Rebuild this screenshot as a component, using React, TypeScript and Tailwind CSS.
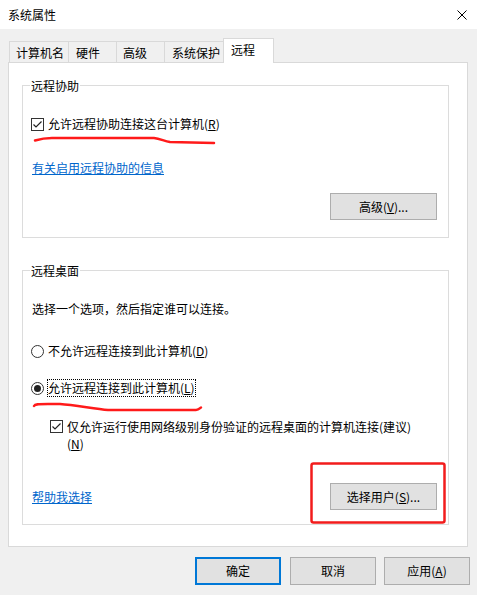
import React from "react";

const font = "font-['Noto_Sans_CJK_SC','Liberation_Sans',sans-serif]";

function CheckBox() {
  return (
    <span className="flex h-[13px] w-[13px] shrink-0 items-center justify-center border border-[#333333] bg-white">
      <svg width="11" height="11" viewBox="0 0 11 11">
        <polyline points="1.5,5.5 4,8 9.5,2.5" fill="none" stroke="#222" strokeWidth="1.2" />
      </svg>
    </span>
  );
}

function Radio({ checked }: { checked?: boolean }) {
  return (
    <span className="flex h-[13px] w-[13px] shrink-0 items-center justify-center rounded-full border border-[#333333] bg-white">
      {checked && <span className="h-[7px] w-[7px] rounded-full bg-[#222]" />}
    </span>
  );
}

function Btn({ children, className = "" }: { children: React.ReactNode; className?: string }) {
  return (
    <div className={"flex h-[27px] w-[107px] items-center justify-center border border-[#adadad] bg-[#e1e1e1] leading-[16px] " + className}>
      {children}
    </div>
  );
}

function Legend({ children }: { children: React.ReactNode }) {
  return <span className="-mt-[8px] ml-[7px] block w-fit bg-white px-[1px] leading-[16px]">{children}</span>;
}

export default function App() {
  return (
    <div className={"relative h-[595px] w-[477px] overflow-hidden bg-[#f0f0f0] text-[12px] text-black " + font}>
      {/* title bar */}
      <div className="flex h-[29px] items-center justify-between bg-white pl-[8px] pr-[10px]">
        <span className="leading-[16px]">系统属性</span>
        <svg width="10" height="10" viewBox="0 0 10 10">
          <path d="M0.5 0.5 L9.5 9.5 M9.5 0.5 L0.5 9.5" stroke="#000" strokeWidth="1" />
        </svg>
      </div>

      {/* tabs */}
      <div className="flex h-[33px] items-end pl-[9px] pt-[9px]">
        <div className="h-[21px] w-[59px] border-l border-t border-[#d9d9d9] pl-[6px] leading-[21px]">计算机名</div>
        <div className="h-[21px] w-[48px] border-l border-t border-[#d9d9d9] pl-[7px] leading-[21px]">硬件</div>
        <div className="h-[21px] w-[48px] border-l border-t border-[#d9d9d9] pl-[6px] leading-[21px]">高级</div>
        <div className="h-[21px] w-[59px] border-l border-t border-[#d9d9d9] pl-[7px] leading-[21px]">系统保护</div>
        <div className="relative z-10 -mb-px h-[25px] w-[51px] border-x border-t border-[#d9d9d9] bg-white pl-[7px] leading-[22px]">远程</div>
      </div>

      {/* panel */}
      <div className="ml-[8px] flex h-[485px] w-[460px] flex-col border border-[#d9d9d9] bg-white">
        {/* remote assistance */}
        <div className="ml-[13px] mt-[22px] flex h-[153px] w-[427px] flex-col border border-[#dcdcdc]">
          <Legend>远程协助</Legend>
          <div className="ml-[8px] mt-[22px] flex h-[16px] items-center gap-[4px] leading-[16px]">
            <CheckBox />
            <span>
              允许远程协助连接这台计算机(<u className="underline">R</u>)
            </span>
          </div>
          <a className="ml-[9px] mt-[28px] w-fit leading-[16px] text-[#0066cc] underline">有关启用远程协助的信息</a>
          <Btn className="mr-[11px] mt-[17px] self-end">
            高级(<u className="underline">V</u>)...
          </Btn>
        </div>

        {/* remote desktop */}
        <div className="ml-[13px] mt-[32px] flex h-[255px] w-[427px] flex-col border border-[#dcdcdc]">
          <Legend>远程桌面</Legend>
          <div className="ml-[9px] mt-[22px] leading-[16px]">选择一个选项，然后指定谁可以连接。</div>
          <div className="ml-[8px] mt-[26px] flex h-[16px] items-center gap-[4px] leading-[16px]">
            <Radio />
            <span>
              不允许远程连接到此计算机(<u className="underline">D</u>)
            </span>
          </div>
          <div className="ml-[8px] mt-[20px] flex h-[18px] items-center gap-[3px]">
            <Radio checked />
            <span className="border border-dotted border-black leading-[16px]">
              允许远程连接到此计算机(<u className="underline">L</u>)
            </span>
          </div>
          <div className="ml-[27px] mt-[21px] flex items-start gap-[4px] leading-[17px]">
            <span className="mt-[2px]">
              <CheckBox />
            </span>
            <span>
              仅允许运行使用网络级别身份验证的远程桌面的计算机连接(建议)
              <br />(<u className="underline">N</u>)
            </span>
          </div>
          <div className="mt-auto flex items-center justify-between pb-[14px] pl-[9px] pr-[11px]">
            <a className="leading-[16px] text-[#0066cc] underline">帮助我选择</a>
            <Btn>
              选择用户(<u className="underline">S</u>)...
            </Btn>
          </div>
        </div>
      </div>

      {/* dialog buttons */}
      <div className="mt-[10px] flex justify-end pr-[7px]">
        <div className="flex h-[28px] w-[86px] items-center justify-center border-2 border-[#0078d7] bg-[#e1e1e1] leading-[16px]">确定</div>
        <div className="ml-[9px] flex h-[28px] w-[86px] items-center justify-center border border-[#adadad] bg-[#e1e1e1] leading-[16px]">取消</div>
        <div className="ml-[8px] flex h-[28px] w-[86px] items-center justify-center border border-[#adadad] bg-[#e1e1e1] leading-[16px]">
          应用(<u className="underline">A</u>)
        </div>
      </div>

      {/* red annotations */}
      <svg className="pointer-events-none absolute left-0 top-0" width="477" height="595" viewBox="0 0 477 595">
        <path
          d="M35 140.5 C40 139 45 138 52 138 L154 138 C160 138.5 164 141 170 142 L214 143"
          fill="none"
          stroke="#ff1a1a"
          strokeWidth="2.5"
          strokeLinecap="round"
        />
        <path
          d="M34 406 C35 404 38 404 48 404 L60 404 C75 405 95 409 108 410 L196 410 C199 410 200 408 201 407.5"
          fill="none"
          stroke="#ff1a1a"
          strokeWidth="2.5"
          strokeLinecap="round"
        />
        <rect x="311.5" y="463.5" width="133" height="59" rx="2" fill="none" stroke="#f21c1c" strokeWidth="2.5" />
      </svg>
    </div>
  );
}
